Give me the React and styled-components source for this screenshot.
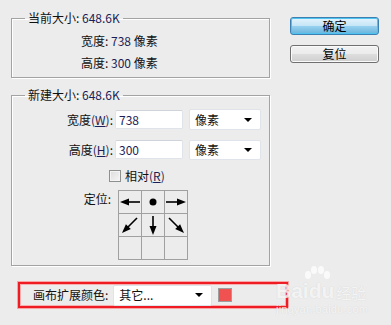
import React from "react";
import styled, { createGlobalStyle } from "styled-components";

const Global = createGlobalStyle`
  html, body { margin: 0; padding: 0; background: #ececec; }
  body { font-family: "Noto Sans CJK SC", "Noto Sans", sans-serif; font-size: 12px; color: #111; }
`;

const Page = styled.div`
  position: relative;
  width: 391px;
  height: 325px;
  overflow: hidden;
  background: #ececec;
  display: flex;
  align-items: flex-start;
`;

const LeftCol = styled.div`
  margin-left: 11px;
  width: 259px;
  display: flex;
  flex-direction: column;
  padding-top: 10px;
`;

const RightCol = styled.div`
  margin-left: 20px;
  padding-top: 17px;
  display: flex;
  flex-direction: column;
  gap: 10px;
`;

const Button = styled.button`
  width: 89px;
  height: 18px;
  box-sizing: border-box;
  padding: 0;
  margin: 0;
  font-family: inherit;
  font-size: 12px;
  line-height: 14px;
  color: #000;
  border-radius: 3px;
  border: 1px solid ${(p) => (p.$primary ? "#3c7fb1" : "#707070")};
  background: ${(p) =>
    p.$primary
      ? "linear-gradient(#e5f4fc 0%, #c4e5f6 50%, #98d1ef 51%, #68b3db 100%)"
      : "linear-gradient(#f2f2f2 0%, #ebebeb 50%, #dddddd 51%, #cfcfcf 100%)"};
  box-shadow: ${(p) => (p.$primary ? "0 0 0 1px #4fc3f0 inset" : "inset 0 0 0 1px #fafafa")};
`;

const Group = styled.fieldset`
  margin: ${(p) => p.$mt || 0}px 0 0 0;
  padding: 0 0 ${(p) => p.$pb || 0}px 0;
  border: 1px solid #a3a3a3;
  box-shadow: 1px 1px 0 #fff, inset 1px 1px 0 #fff;
  min-width: 0;
`;

const Legend = styled.legend`
  margin-left: 13px;
  padding: 0 3px;
  line-height: 16px;
  height: 16px;
  color: #111;
`;

const Latin = styled.span`
  color: #1d1d55;
`;

const InfoRows = styled.div`
  display: flex;
  flex-direction: column;
  gap: 6px;
  padding: 7px 0 0 69px;
`;

const InfoRow = styled.div`
  line-height: 16px;
  height: 16px;
  white-space: pre;
`;

const FormRows = styled.div`
  display: flex;
  flex-direction: column;
  padding-top: 6px;
`;

const FieldRow = styled.div`
  display: flex;
  align-items: center;
  height: ${(p) => p.$h}px;
  margin-top: ${(p) => p.$mt || 0}px;
`;

const Label = styled.span`
  width: 101px;
  margin-right: 2px;
  text-align: right;
  line-height: 16px;
  white-space: nowrap;
`;

const U = styled.span`
  text-decoration: underline;
  text-underline-offset: 1px;
`;

const TextInput = styled.div`
  box-sizing: border-box;
  width: 68px;
  height: 19px;
  background: #fff;
  border: 1px solid #dfe4ea;
  border-top-color: #cfd4da;
  border-radius: 2px;
  padding-left: 3px;
  line-height: 17px;
  color: #1d1d55;
`;

const Select = styled.div`
  box-sizing: border-box;
  width: ${(p) => p.$w}px;
  height: ${(p) => p.$h || 21}px;
  margin-left: ${(p) => p.$ml || 0}px;
  background: #fff;
  border: 1px solid #dfe4ea;
  border-radius: 2px;
  display: flex;
  align-items: center;
  justify-content: space-between;
  padding: 0 8px 0 5px;
  line-height: 16px;
`;

const Caret = styled.span`
  width: 0;
  height: 0;
  border-left: 4px solid transparent;
  border-right: 4px solid transparent;
  border-top: 4px solid #000;
`;

const CheckRow = styled.div`
  display: flex;
  align-items: center;
  height: 13px;
  margin-top: 9px;
  padding-left: 97px;
  gap: 4px;
  line-height: 16px;
`;

const CheckBox = styled.span`
  box-sizing: border-box;
  width: 12px;
  height: 12px;
  border: 1px solid #8e8f8f;
  background: linear-gradient(135deg, #dcdcdc, #f6f6f6);
  box-shadow: inset 0 0 0 1px #f4f4f4;
`;

const AnchorRow = styled.div`
  display: flex;
  align-items: flex-start;
  margin-top: 8px;
`;

const AnchorLabel = styled.span`
  width: 101px;
  margin-right: 5px;
  text-align: right;
  line-height: 16px;
  padding-top: 1px;
  padding-right: 2px;
  box-sizing: border-box;
`;

const AnchorGrid = styled.div`
  display: grid;
  grid-template-columns: repeat(3, 22px);
  grid-template-rows: repeat(3, 22px);
  gap: 1px;
  border: 1px solid #a0a0a0;
  background: #a0a0a0;
`;

const Cell = styled.div`
  background: #ececec;
  display: flex;
  align-items: center;
  justify-content: center;
`;

const ColorBar = styled.div`
  margin: 16px 0 0 7px;
  width: 270px;
  height: 26px;
  box-sizing: border-box;
  border: 2px solid #f01c24;
  box-shadow: 0 0 0 1px #f7a5a5, inset 0 0 0 1px #f7b0b0;
  display: flex;
  align-items: center;
  padding-left: 13px;
`;

const BarLabel = styled.span`
  line-height: 16px;
  margin-right: 5px;
`;

const Swatch = styled.span`
  box-sizing: border-box;
  width: 14px;
  height: 14px;
  margin-left: 6px;
  background: #f05252;
  border: 1px solid #9e9e9e;
`;

const Watermark = styled.div`
  position: absolute;
  left: 276px;
  top: 266px;
  width: 100px;
  color: rgba(255, 255, 255, 0.75);
  text-shadow: 0 0 1px rgba(170, 170, 170, 0.45);
  font-family: "Liberation Sans", Arial, sans-serif;
  pointer-events: none;
`;

const WmTop = styled.div`
  display: flex;
  align-items: flex-end;
  font-size: 21px;
  font-weight: bold;
  line-height: 22px;
  margin-top: 14px;
`;

const WmCn = styled.span`
  font-family: "Noto Sans CJK SC", sans-serif;
  font-size: 15px;
  font-weight: normal;
  margin-left: 2px;
  line-height: 18px;
`;

const WmUrl = styled.div`
  font-size: 11px;
  line-height: 12px;
  margin-top: 1px;
  letter-spacing: 0.2px;
`;

const Paw = styled.svg`
  position: absolute;
  left: 26px;
  top: 0;
`;

const Arrow = ({ kind }) => (
  <svg width="22" height="22" viewBox="0 0 22 22">
    {kind === "left" && (
      <>
        <line x1="21" y1="11" x2="8" y2="11" stroke="#000" strokeWidth="1.6" />
        <polygon points="1,11 10,7.5 10,14.5" fill="#000" />
      </>
    )}
    {kind === "right" && (
      <>
        <line x1="1" y1="11" x2="14" y2="11" stroke="#000" strokeWidth="1.6" />
        <polygon points="21,11 12,7.5 12,14.5" fill="#000" />
      </>
    )}
    {kind === "dot" && <circle cx="11" cy="11" r="3.5" fill="#000" />}
    {kind === "down" && (
      <>
        <line x1="11" y1="2" x2="11" y2="13" stroke="#000" strokeWidth="1.6" />
        <polygon points="11,21 7.5,12 14.5,12" fill="#000" />
      </>
    )}
    {kind === "downleft" && (
      <>
        <line x1="18" y1="4" x2="8" y2="14" stroke="#000" strokeWidth="1.6" />
        <polygon points="3,19 11.8,15.1 6.9,10.2" fill="#000" />
      </>
    )}
    {kind === "downright" && (
      <>
        <line x1="4" y1="4" x2="14" y2="14" stroke="#000" strokeWidth="1.6" />
        <polygon points="19,19 15.1,10.2 10.2,15.1" fill="#000" />
      </>
    )}
  </svg>
);

const cells = ["left", "dot", "right", "downleft", "down", "downright", null, null, null];

export default function App() {
  return (
    <>
      <Global />
      <Page>
        <LeftCol>
          <Group $pb={6}>
            <Legend>
              当前大小: <Latin>648.6K</Latin>
            </Legend>
            <InfoRows>
              <InfoRow>
                宽度: <Latin>738</Latin> 像素
              </InfoRow>
              <InfoRow>
                高度: <Latin>300</Latin> 像素
              </InfoRow>
            </InfoRows>
          </Group>

          <Group $mt={9} $pb={5}>
            <Legend>
              新建大小: <Latin>648.6K</Latin>
            </Legend>
            <FormRows>
              <FieldRow $h={21}>
                <Label>
                  宽度<Latin>(<U>W</U>)</Latin>:
                </Label>
                <TextInput>738</TextInput>
                <Select $w={72} $ml={6}>
                  <span>像素</span>
                  <Caret />
                </Select>
              </FieldRow>
              <FieldRow $h={21} $mt={9}>
                <Label>
                  高度<Latin>(<U>H</U>)</Latin>:
                </Label>
                <TextInput>300</TextInput>
                <Select $w={72} $ml={6} $h={20}>
                  <span>像素</span>
                  <Caret />
                </Select>
              </FieldRow>
              <CheckRow>
                <CheckBox />
                <span>
                  相对<Latin>(<U>R</U>)</Latin>
                </span>
              </CheckRow>
              <AnchorRow>
                <AnchorLabel>定位:</AnchorLabel>
                <AnchorGrid>
                  {cells.map((k, i) => (
                    <Cell key={i}>{k && <Arrow kind={k} />}</Cell>
                  ))}
                </AnchorGrid>
              </AnchorRow>
            </FormRows>
          </Group>

          <ColorBar>
            <BarLabel>画布扩展颜色:</BarLabel>
            <Select $w={99}>
              <span>其它...</span>
              <Caret />
            </Select>
            <Swatch />
          </ColorBar>
        </LeftCol>

        <RightCol>
          <Button $primary>确定</Button>
          <Button>复位</Button>
        </RightCol>

        <Watermark>
          <Paw width="30" height="18" viewBox="0 0 30 18">
            <ellipse cx="6" cy="9" rx="3" ry="4" fill="rgba(255,255,255,0.75)" />
            <ellipse cx="12" cy="4" rx="3" ry="4" fill="rgba(255,255,255,0.75)" />
            <ellipse cx="19" cy="4" rx="3" ry="4" fill="rgba(255,255,255,0.75)" />
            <ellipse cx="25" cy="9" rx="3" ry="4" fill="rgba(255,255,255,0.75)" />
          </Paw>
          <WmTop>
            Bai<span>du</span>
            <WmCn>经验</WmCn>
          </WmTop>
          <WmUrl>jingyan.baidu.com</WmUrl>
        </Watermark>
      </Page>
    </>
  );
}
